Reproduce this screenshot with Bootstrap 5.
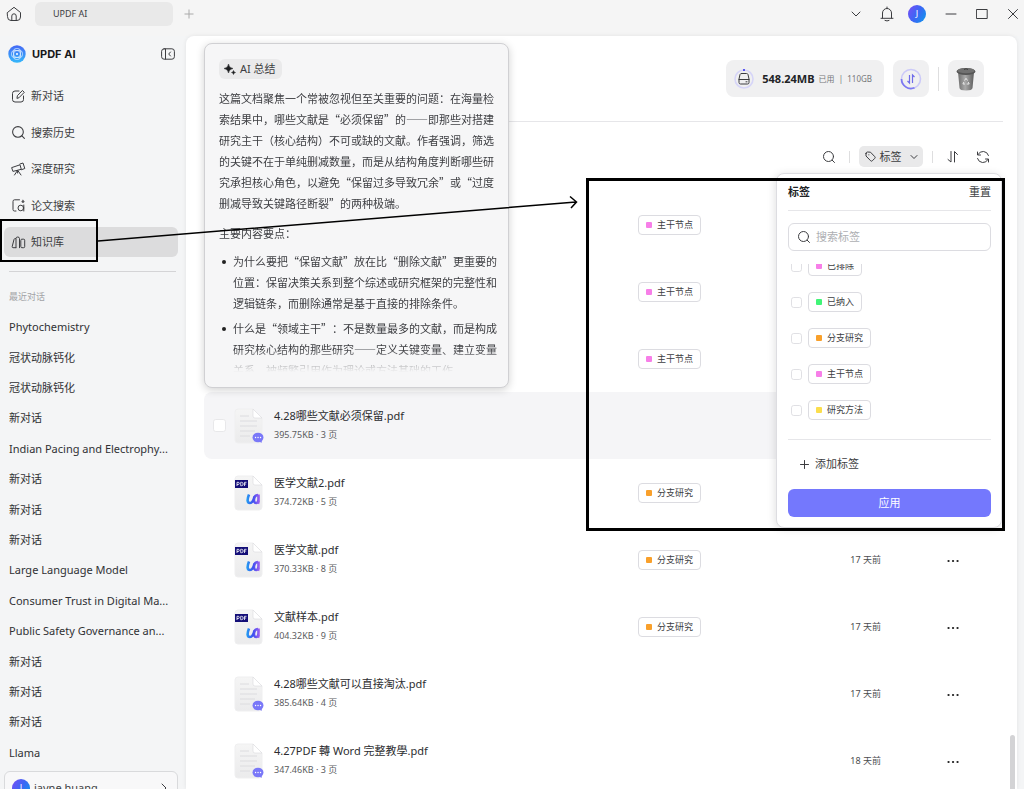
<!DOCTYPE html>
<html lang="zh-CN">
<head>
<meta charset="utf-8">
<meta name="viewport" content="width=device-width, initial-scale=1">
<title>UPDF AI</title>
<link href="https://cdn.jsdelivr.net/npm/bootstrap@5.3.0/dist/css/bootstrap.min.css" rel="stylesheet">
<style>
:root { --ink:#3d3e42; --line:#e6e6e9; }
body { font-family:"Noto Sans","Noto Sans CJK SC",sans-serif; font-size:11px; line-height:16px; color:var(--ink); background:#f4f5f6; height:100vh; overflow:hidden; }
a { color:inherit; text-decoration:none; }
button { color:inherit; background:none; border:0; padding:0; line-height:16px; }
svg { display:block; flex:none; }
.stroke-icon { fill:none; stroke:#3c3d40; stroke-width:1; stroke-linecap:round; stroke-linejoin:round; }

/* window bar */
.titlebar { height:36px; background:#f5f5f5; padding-left:6px; padding-right:5px; }
.titlebar-row { height:27px; }
.window-tab { width:138px; height:24px; border-radius:6px; background:#e9e9e9; font-size:9px; padding-left:18px; margin-left:13px; margin-right:11px; }
.window-actions { gap:19px; }
.window-actions .avatar { margin-left:-5px; }
.avatar { width:18px; height:18px; border-radius:50%; background:linear-gradient(120deg,#7a4df5,#3b66f5 50%,#0a9bea); color:#fff; font-size:9px; }

/* sidebar */
.side { width:186px; height:calc(100vh - 20px); padding:0 8px 0 4px; }
.brand { height:36px; padding:0 3px 0 4px; gap:6px; }
.brand strong { font-family:Inter,sans-serif; color:#17181a; font-size:11px; }
.side-nav { height:176px; margin-top:9px; }
.side-nav a { height:30px; padding-left:7px; border-radius:6px; gap:5px; }
.side-nav a.current { background:#dcdcdd; }
.side hr { margin:14px 2px 0 5px; opacity:1; color:#d4d4d6; }
.recent-title { font-size:9px; color:#a2a3a6; margin:17px 0 7px 5px; }
.history { min-height:0; padding-left:5px; }
.history a { color:#303134; }
.user-box { height:34px; border:1px solid #d9dadc; border-radius:6px; background:#f8f8f9; padding:0 9px 0 7px; margin-top:3px; }

/* main */
.panel { background:#fff; border-radius:8px 8px 0 0; margin-right:7px; box-shadow:0 0 4px rgba(0,0,0,.08); min-width:0; height:calc(100vh - 36px); overflow:hidden; }
.storage-row { height:85px; padding-right:33px; gap:9px; }
.tile { height:37px; border-radius:8px; background:#f0f0f1; }
.storage { padding:0 12px 0 8px; }
.storage strong { color:#222326; margin:0 4px 0 8px; }
.storage small { font-size:8px; color:#77787b; }
.tile-square { width:36px; }
.v-rule { width:1px; height:12px; background:#dededf; }
.v-rule.tall { height:24px; margin:0; }
.tools { height:70px; margin:0 14px 0 18px; padding-right:13px; border-top:1px solid var(--line); }
.tools .v-rule { margin:0 9px 0 13px; }
.tools .v-rule.after { margin:0 13px 0 9px; }
.tag-toggle { width:64px; height:21px; border-radius:5px; background:#e9e9ea; gap:4px; }
.files { margin:0 14px 0 18px; }
.files table { width:100%; table-layout:fixed; }
.files td { height:67px; padding:0; vertical-align:middle; }
.files tr.hovered td { background:#f5f5f7; }
.files tr.hovered td:first-child { border-radius:8px 0 0 8px; padding-left:9px; }
.files .meta { font-size:9px; color:#5b5c60; line-height:16px; margin-top:3px; }
.files .name { color:#2c2d30; }
.files .when { font-size:9px; color:#4c4d50; }
.col-check { width:30px; } .col-icon { width:40px; } .col-tag { width:149px; } .col-when { width:94px; } .col-gap { width:65px; } .col-more { width:57px; }
.form-check-input { margin:0; border:1px solid #e0e0e4; border-radius:3px; width:11px; height:11px; background-color:#fff; display:block; }
.files .form-check-input { width:13px; height:13px; border-color:#e8e8ea; }
.chip { display:inline-flex; align-items:center; height:20px; border:1px solid #dcdce1; border-radius:4px; background:#fff; font-size:9px; padding:0 7px; gap:5px; }
.chip i { width:6px; height:6px; border-radius:1px; }
.pink { background:#f77fe8; } .green { background:#41f577; } .orange { background:#f9a02b; } .yellow { background:#fbde4d; }
.thumb { right:2px; bottom:0; width:5px; height:54px; border-radius:3px 3px 0 0; background:#d3d3d5; }

/* summary popover */
.summary { left:204px; top:43px; width:305px; height:345px; border:1px solid #d0d0d3; border-radius:8px; background:#f6f6f7; box-shadow:0 2px 8px rgba(0,0,0,.18); padding:15px 11px 16px 14px; z-index:2; }
.ai-label { height:20px; background:#eaeaeb; border-radius:6px; padding:0 6px 0 5px; gap:4px; }
.summary-text { font-family:"Noto Sans CJK SC",sans-serif; line-height:21px; margin-top:9px; height:284px; overflow:hidden; text-spacing-trim:space-all; -webkit-mask-image:linear-gradient(#000 92%,transparent); mask-image:linear-gradient(#000 92%,transparent); }
.summary-text p { margin:0 0 9px; }
.summary-text ul { margin:-2px 0 0; padding:0; list-style:none; }
.summary-text li { padding-left:14px; position:relative; }
.summary-text li::before { content:""; position:absolute; left:3px; top:9px; width:4px; height:4px; border-radius:50%; background:#222; }
.summary-text li + li { margin-top:4px; }

/* tag filter menu */
.filter { right:22px; top:173px; width:226px; height:355px; border:1px solid #dddde1; border-radius:8px; background:#fff; box-shadow:-1px 1px 8px rgba(0,0,0,.12); padding:0 10px 0 11px; z-index:2; }
.filter-head { height:37px; border-bottom:1px solid var(--line); }
.filter-head strong { color:#222326; }
.search-box { height:28px; border:1px solid #dcdce1; border-radius:6px; margin-top:12px; padding:0 8px; gap:5px; }
.search-box input { border:0; outline:0; padding:0; min-width:0; width:100%; font-size:11px; line-height:16px; background:none; color:var(--ink); }
.search-box input::placeholder { color:#aeafb3; }
.tag-list { height:164px; margin-top:13px; padding-left:3px; overflow:hidden; }
.tag-list > div { height:36px; gap:6px; flex:none; }
.add-tag { margin-top:16px; height:16px; padding-left:12px; gap:6px; }
.rule-top { margin-top:11px; border-top:1px solid var(--line); }
.apply { height:28px; background:#7478fd; color:#fff; border-radius:6px; margin-top:17px; }

/* callouts */
.callout-nav { left:0; top:219px; width:98px; height:43px; border:2px solid #000; z-index:4; }
.callout-filter { right:19px; top:178px; width:419px; height:353px; border:3px solid #000; z-index:4; }
.callout-arrow { left:98px; top:190px; z-index:4; }
.pass { pointer-events:none; }
</style>
</head>
<body>
<svg class="position-absolute" width="0" height="0" aria-hidden="true">
  <defs>
    <linearGradient id="gu" gradientUnits="userSpaceOnUse" x1="12" y1="0" x2="26" y2="0"><stop offset="0" stop-color="#22a6f2"/><stop offset=".5" stop-color="#3d4ff0"/><stop offset="1" stop-color="#a561f0"/></linearGradient>
    <linearGradient id="gp" x1="0" y1="0" x2="0" y2="1"><stop offset="0" stop-color="#f5f5f5"/><stop offset="1" stop-color="#ebebec"/></linearGradient>
    <symbol id="doc" viewBox="0 0 32 38"><path d="M4 2H19L28 11V33a3 3 0 0 1-3 3H4a3 3 0 0 1-3-3V5a3 3 0 0 1 3-3Z" fill="url(#gp)" stroke="#efeff0"/><path d="M19 2L28 11H21a2 2 0 0 1-2-2Z" fill="#fff" stroke="#dadadd" stroke-width=".6"/></symbol>
    <symbol id="chat-doc" viewBox="0 0 32 38"><use href="#doc"/><path d="M6 9h9M6 14h17M6 19h17M6 24h15M6 29h10" stroke="#dcdcdf" stroke-width="1" fill="none"/><ellipse cx="24" cy="30.500" rx="5.500" ry="4.800" fill="#7a78f8"/><path d="M25 34l2.500 2 .5-3.500z" fill="#7a78f8"/><path d="M21.500 30.500h.1M24 30.500h.1M26.500 30.500h.1" stroke="#fff" stroke-width="1.300" stroke-linecap="round"/></symbol>
    <symbol id="pdf-doc" viewBox="0 0 32 38"><use href="#doc"/><path d="M1 6h13v8H1z" fill="#140f78"/><path d="M3 12V8.300h1.200a1 1 0 0 1 0 2.200H3M6.700 8.300v3.400h.8a1.700 1.700 0 0 0 0-3.400zM10.500 12V8.300h2M10.500 10h1.700" fill="none" stroke="#fff" stroke-width=".8"/><path d="M15 20.500c-2 5-2 8.500 1 8.500 2.500 0 3.700-3 4.500-6.500M24 21c-4.500 0-5.500 8-1.800 8 2.300 0 2.600-4 2.300-8.500v5.500c0 2 .3 2.800 1 3" fill="none" stroke="url(#gu)" stroke-width="2.600"/></symbol>
    <symbol id="glass" viewBox="0 0 14 14"><circle cx="6.500" cy="6.500" r="5"/><path d="M10.200 10.200L12.500 12.500"/></symbol>
    <symbol id="sort" viewBox="0 0 14 14"><path d="M5 1.500V12L2 9.500M8.500 12V1.500L11.500 4.500"/></symbol>
    <symbol id="dots" viewBox="0 0 14 6"><path d="M2.500 3h.1M7 3h.1M11.500 3h.1" stroke="#222" stroke-width="2.200" stroke-linecap="round"/></symbol>
    <linearGradient id="gl" x2="0" y2="1"><stop stop-color="#4468f5"/><stop offset="1" stop-color="#35b8fa"/></linearGradient>
    <linearGradient id="gt"><stop stop-color="#6e6e6e"/><stop offset=".45" stop-color="#a9a9a9"/><stop offset="1" stop-color="#5d5d5d"/></linearGradient>
  </defs>
</svg>

<header class="titlebar">
  <div class="titlebar-row d-flex align-items-center">
    <button aria-label="主页"><svg class="stroke-icon" width="16" height="16" viewBox="0 0 16 16"><path d="M1.500 6.500L8 1.300l6.500 5.200V11q0 3.500-3.500 3.500H5Q1.500 14.500 1.500 11ZM5.800 14.500V10a2.200 2.200 0 0 1 4.400 0v4.500"/></svg></button>
    <div class="window-tab d-flex align-items-center">UPDF AI</div>
    <button aria-label="新标签页"><svg width="10" height="10" viewBox="0 0 10 10"><path d="M5 .5v9M.5 5h9" stroke="#aaa"/></svg></button>
    <div class="window-actions ms-auto d-flex align-items-center">
      <button aria-label="更多"><svg class="stroke-icon" width="10" height="10" viewBox="0 0 10 10"><path d="M1 3l4 4 4-4"/></svg></button>
      <button aria-label="通知"><svg class="stroke-icon" width="14" height="16" viewBox="0 0 14 16"><path d="M2.500 12V7a4.500 4.500 0 0 1 9 0v5M1 12.300h12M7 2.500V1M5 14.500q2 1 4 0"/></svg></button>
      <button class="avatar" aria-label="账户">J</button>
      <button aria-label="最小化"><svg class="stroke-icon" width="12" height="12" viewBox="0 0 12 12"><path d="M1 6h10"/></svg></button>
      <button aria-label="最大化"><svg class="stroke-icon" width="12" height="12" viewBox="0 0 12 12"><path d="M.8 1.500h10.400v9H.8z"/></svg></button>
      <button aria-label="关闭"><svg class="stroke-icon" width="12" height="12" viewBox="0 0 12 12"><path d="M1.500 1.500l9 9M10.500 1.500l-9 9"/></svg></button>
    </div>
  </div>
</header>

<div class="d-flex">
  <aside class="side d-flex flex-column flex-shrink-0">
    <div class="brand d-flex align-items-center">
      <svg width="18" height="18" viewBox="0 0 18 18"><circle cx="9" cy="9" r="8.700" fill="url(#gl)"/><g fill="none" stroke="#d9ecff" stroke-width=".8"><circle cx="9" cy="9" r="3.500"/><rect x="3.500" y="5.500" width="11" height="7" rx="3"/><rect x="5.500" y="3.500" width="7" height="11" rx="3"/></g><circle cx="9" cy="9" r="1" fill="#fff"/></svg>
      <strong>UPDF AI</strong>
      <button class="ms-auto" aria-label="收起侧栏"><svg class="stroke-icon" width="14" height="12" viewBox="0 0 14 12"><rect x=".6" y=".8" width="12.800" height="10.400" rx="2.500"/><path d="M4.500 1v10M9.500 4L7.700 6l1.800 2"/></svg></button>
    </div>
    <nav class="side-nav d-flex flex-column justify-content-between">
      <a href="#" class="d-flex align-items-center"><svg class="stroke-icon" width="15" height="15" viewBox="0 0 15 15"><path d="M8 2H4Q1.500 2 1.500 4.500v6Q1.500 13 4 13h6q2.500 0 2.500-2.500V7M6 9l.4-2.300 5-5.200 1.900 1.800-5.100 5.200Z"/></svg>新对话</a>
      <a href="#" class="d-flex align-items-center"><svg class="stroke-icon" width="15" height="15"><use href="#glass"/></svg>搜索历史</a>
      <a href="#" class="d-flex align-items-center"><svg class="stroke-icon" width="15" height="15" viewBox="0 0 15 15"><path d="M1 5.500L9 2.800l1.300 4.500-8 2ZM9 2l3-1 1.800 5.500-3.300 1.200M6.500 8.500L3.500 13M6.800 8.500L10 13M6.600 8.500V11"/></svg>深度研究</a>
      <a href="#" class="d-flex align-items-center"><svg class="stroke-icon" width="15" height="15" viewBox="0 0 15 15"><path d="M8.500 1.800H3.500Q2 1.800 2 3.500v8Q2 13 3.500 13H5M12.800 7v6"/><circle cx="9.800" cy="10" r="2.800"/><path d="M12 2.200l.4 1 1 .4-1 .4-.4 1-.4-1-1-.4 1-.4Z" fill="#3c3d40" stroke-width=".6"/></svg>论文搜索</a>
      <a href="#" class="d-flex align-items-center current"><svg class="stroke-icon" width="15" height="15" viewBox="0 0 15 15"><path d="M4.500 3.500Q3.300 3.300 3 4.500L1.200 11.500q-.2 1 .8 1.200h2.800M5 12.700V3.500Q5 2 6.700 2t1.800 1.500v9.200M9.800 5.200q0-1 1-1h1.900q1 0 1 1v6.500q0 1-1 1h-1.900q-1 0-1-1Z"/></svg>知识库</a>
    </nav>
    <hr>
    <div class="recent-title">最近对话</div>
    <nav class="history d-flex flex-column flex-grow-1">
      <a href="#" class="flex-fill d-flex align-items-center">Phytochemistry</a>
      <a href="#" class="flex-fill d-flex align-items-center">冠状动脉钙化</a>
      <a href="#" class="flex-fill d-flex align-items-center">冠状动脉钙化</a>
      <a href="#" class="flex-fill d-flex align-items-center">新对话</a>
      <a href="#" class="flex-fill d-flex align-items-center text-nowrap">Indian Pacing and Electrophy...</a>
      <a href="#" class="flex-fill d-flex align-items-center">新对话</a>
      <a href="#" class="flex-fill d-flex align-items-center">新对话</a>
      <a href="#" class="flex-fill d-flex align-items-center">新对话</a>
      <a href="#" class="flex-fill d-flex align-items-center">Large Language Model</a>
      <a href="#" class="flex-fill d-flex align-items-center text-nowrap">Consumer Trust in Digital Ma...</a>
      <a href="#" class="flex-fill d-flex align-items-center text-nowrap">Public Safety Governance an...</a>
      <a href="#" class="flex-fill d-flex align-items-center">新对话</a>
      <a href="#" class="flex-fill d-flex align-items-center">新对话</a>
      <a href="#" class="flex-fill d-flex align-items-center">新对话</a>
      <a href="#" class="flex-fill d-flex align-items-center">Llama</a>
    </nav>
    <div class="user-box d-flex align-items-center flex-shrink-0">
      <span class="avatar d-flex align-items-center justify-content-center me-1">J</span><span>jayne huang</span>
      <svg class="stroke-icon ms-auto" width="8" height="10" viewBox="0 0 8 10"><path d="M2 1l4 4-4 4"/></svg>
    </div>
  </aside>

  <main class="panel flex-grow-1 position-relative">
    <div class="storage-row d-flex align-items-center justify-content-end">
      <div class="tile storage d-flex align-items-center">
        <svg width="20" height="20" viewBox="0 0 20 20"><circle cx="10" cy="10" r="9" fill="none" stroke="#d6d5f8" stroke-width="1.600"/><path d="M9 1h2" stroke="#5b58f0" stroke-width="2"/><path class="stroke-icon" d="M7.500 4.500h5q1.200 0 1.500 1l1 4.500v3.500q0 1.500-1.500 1.500h-7Q5 15 5 13.500V10l1-4.500q.3-1 1.500-1ZM5 10.500h10M12 12.800h1"/></svg>
        <strong>548.24MB</strong>
        <small>已用&nbsp; |&nbsp; 110GB</small>
      </div>
      <button class="tile tile-square d-flex align-items-center justify-content-center" aria-label="传输">
        <svg width="22" height="22" viewBox="0 0 22 22" fill="none"><circle cx="11" cy="11" r="9.500" stroke="#cbc9f8" stroke-width="1.600"/><path d="M1.500 11a9.500 9.500 0 0 0 13 8.800" stroke="#7d79f0" stroke-width="1.700"/><path d="M9.500 7v8L7.500 13M12.500 15V7l2 2" stroke="#6e6bea" stroke-width="1.200"/></svg>
      </button>
      <div class="v-rule tall"></div>
      <button class="tile tile-square d-flex align-items-center justify-content-center" aria-label="回收站">
        <svg width="20" height="24" viewBox="0 0 20 24"><path d="M2 5h16l-1.500 16q-.3 2.500-6.500 2.500T3.500 21Z" fill="url(#gt)"/><ellipse cx="10" cy="4.500" rx="9.500" ry="3.500" fill="#555"/><ellipse cx="10" cy="3.700" rx="8.500" ry="2.600" fill="#717171"/><path d="M8 2.500q2-1.500 4 0" stroke="#3d3d3d" fill="none"/><path d="M8.500 13.500L10 11.300l1.500 2.200M12.200 15l1 2h-2.500M9 17H6.900l1-2" fill="none" stroke="#e8e8e8" stroke-width="1"/></svg>
      </button>
    </div>

    <div class="tools d-flex align-items-center justify-content-end">
      <button aria-label="搜索"><svg class="stroke-icon" width="14" height="14"><use href="#glass"/></svg></button>
      <div class="v-rule"></div>
      <button class="tag-toggle d-flex align-items-center justify-content-center"><svg class="stroke-icon" width="11" height="11" viewBox="0 0 11 11"><path d="M1 2.500V5L5.700 9.800q.8.800 1.600 0L9.800 7.300q.8-.8 0-1.600L5.500 1.200 2.500 1Q1 1 1 2.500ZM3.800 3.800h.1"/></svg>标签<svg class="stroke-icon ms-1" width="8" height="8" viewBox="0 0 8 8"><path d="M1 2.500l3 3 3-3"/></svg></button>
      <div class="v-rule after"></div>
      <button aria-label="排序"><svg class="stroke-icon" width="14" height="14"><use href="#sort"/></svg></button>
      <button class="ms-3" aria-label="刷新"><svg class="stroke-icon" width="14" height="14" viewBox="0 0 14 14"><path d="M12.500 5.500A5.700 5.700 0 0 0 2 4.500M1.500 2v3h3M1.500 8.500A5.700 5.700 0 0 0 12 9.500M12.500 12V9h-3"/></svg></button>
    </div>

    <div class="files">
      <table>
        <colgroup><col class="col-check"><col class="col-icon"><col><col class="col-tag"><col class="col-when"><col class="col-gap"><col class="col-more"></colgroup>
        <tbody>
          <tr><td colspan="3"></td><td><span class="chip"><i class="pink"></i>主干节点</span></td><td colspan="3"></td></tr>
          <tr><td colspan="3"></td><td><span class="chip"><i class="pink"></i>主干节点</span></td><td colspan="3"></td></tr>
          <tr><td colspan="3"></td><td><span class="chip"><i class="pink"></i>主干节点</span></td><td colspan="3"></td></tr>
          <tr class="hovered"><td><input class="form-check-input" type="checkbox" aria-label="选择文件"></td><td><svg width="32" height="38"><use href="#chat-doc"/></svg></td><td><div class="name">4.28哪些文献必须保留.pdf</div><div class="meta">395.75KB · 3 页</div></td><td></td><td></td><td></td><td></td></tr>
          <tr><td></td><td><svg width="32" height="38"><use href="#pdf-doc"/></svg></td><td><div class="name">医学文献2.pdf</div><div class="meta">374.72KB · 5 页</div></td><td><span class="chip"><i class="orange"></i>分支研究</span></td><td></td><td></td><td></td></tr>
          <tr><td></td><td><svg width="32" height="38"><use href="#pdf-doc"/></svg></td><td><div class="name">医学文献.pdf</div><div class="meta">370.33KB · 8 页</div></td><td><span class="chip"><i class="orange"></i>分支研究</span></td><td class="when text-end">17 天前</td><td></td><td><button aria-label="更多操作"><svg width="14" height="6"><use href="#dots"/></svg></button></td></tr>
          <tr><td></td><td><svg width="32" height="38"><use href="#pdf-doc"/></svg></td><td><div class="name">文献样本.pdf</div><div class="meta">404.32KB · 9 页</div></td><td><span class="chip"><i class="orange"></i>分支研究</span></td><td class="when text-end">17 天前</td><td></td><td><button aria-label="更多操作"><svg width="14" height="6"><use href="#dots"/></svg></button></td></tr>
          <tr><td></td><td><svg width="32" height="38"><use href="#chat-doc"/></svg></td><td><div class="name">4.28哪些文献可以直接淘汰.pdf</div><div class="meta">385.64KB · 4 页</div></td><td></td><td class="when text-end">17 天前</td><td></td><td><button aria-label="更多操作"><svg width="14" height="6"><use href="#dots"/></svg></button></td></tr>
          <tr><td></td><td><svg width="32" height="38"><use href="#chat-doc"/></svg></td><td><div class="name">4.27PDF 轉 Word 完整教學.pdf</div><div class="meta">347.46KB · 3 页</div></td><td></td><td class="when text-end">18 天前</td><td></td><td><button aria-label="更多操作"><svg width="14" height="6"><use href="#dots"/></svg></button></td></tr>
        </tbody>
      </table>
    </div>
    <div class="thumb position-absolute"></div>
  </main>
</div>

<section class="summary position-absolute">
  <div class="ai-label d-inline-flex align-items-center"><svg width="12" height="12" viewBox="0 0 12 12"><path d="M4.500 1Q5 5 9 5.500 5 6 4.500 10 4 6 0 5.500 4 5 4.500 1ZM9.500 7.500q.2 1.800 2 2-1.800.2-2 2-.2-1.800-2-2 1.800-.2 2-2Z" fill="#1b1c1e" stroke="#1b1c1e" stroke-width=".5"/></svg>AI 总结</div>
  <div class="summary-text">
    <p>这篇文档聚焦一个常被忽视但至关重要的问题：在海量检索结果中，哪些文献是“必须保留”的——即那些对搭建研究主干（核心结构）不可或缺的文献。作者强调，筛选的关键不在于单纯删减数量，而是从结构角度判断哪些研究承担核心角色，以避免“保留过多导致冗余”或“过度删减导致关键路径断裂”的两种极端。</p>
    <p>主要内容要点：</p>
    <ul>
      <li>为什么要把“保留文献”放在比“删除文献”更重要的位置：保留决策关系到整个综述或研究框架的完整性和逻辑链条，而删除通常是基于直接的排除条件。</li>
      <li>什么是“领域主干”：不是数量最多的文献，而是构成研究核心结构的那些研究——定义关键变量、建立变量关系，被频繁引用作为理论或方法基础的工作。</li>
    </ul>
  </div>
</section>

<section class="filter position-absolute">
  <div class="filter-head d-flex align-items-center justify-content-between"><strong>标签</strong><button>重置</button></div>
  <label class="search-box d-flex align-items-center"><svg class="stroke-icon" width="14" height="14"><use href="#glass"/></svg><input type="text" placeholder="搜索标签" aria-label="搜索标签"></label>
  <div class="tag-list d-flex flex-column justify-content-end">
    <div class="d-flex align-items-center"><input class="form-check-input" type="checkbox" id="t1"><label class="chip" for="t1"><i class="pink"></i>已排除</label></div>
    <div class="d-flex align-items-center"><input class="form-check-input" type="checkbox" id="t2"><label class="chip" for="t2"><i class="green"></i>已纳入</label></div>
    <div class="d-flex align-items-center"><input class="form-check-input" type="checkbox" id="t3"><label class="chip" for="t3"><i class="orange"></i>分支研究</label></div>
    <div class="d-flex align-items-center"><input class="form-check-input" type="checkbox" id="t4"><label class="chip" for="t4"><i class="pink"></i>主干节点</label></div>
    <div class="d-flex align-items-center"><input class="form-check-input" type="checkbox" id="t5"><label class="chip" for="t5"><i class="yellow"></i>研究方法</label></div>
  </div>
  <div class="rule-top"></div>
  <button class="add-tag d-flex align-items-center"><svg class="stroke-icon" width="9" height="9" viewBox="0 0 9 9"><path d="M4.500 .5v8M.5 4.500h8"/></svg>添加标签</button>
  <button class="apply w-100">应用</button>
</section>

<div class="callout-nav position-absolute pass"></div>
<div class="callout-filter position-absolute pass"></div>
<svg class="callout-arrow position-absolute pass" width="482" height="54" viewBox="0 0 482 54" fill="none" stroke="#000" stroke-width="1.500"><path d="M0 51L478 12M472 6.500l6.500 5.500-5.500 6"/></svg>
</body>
</html>
